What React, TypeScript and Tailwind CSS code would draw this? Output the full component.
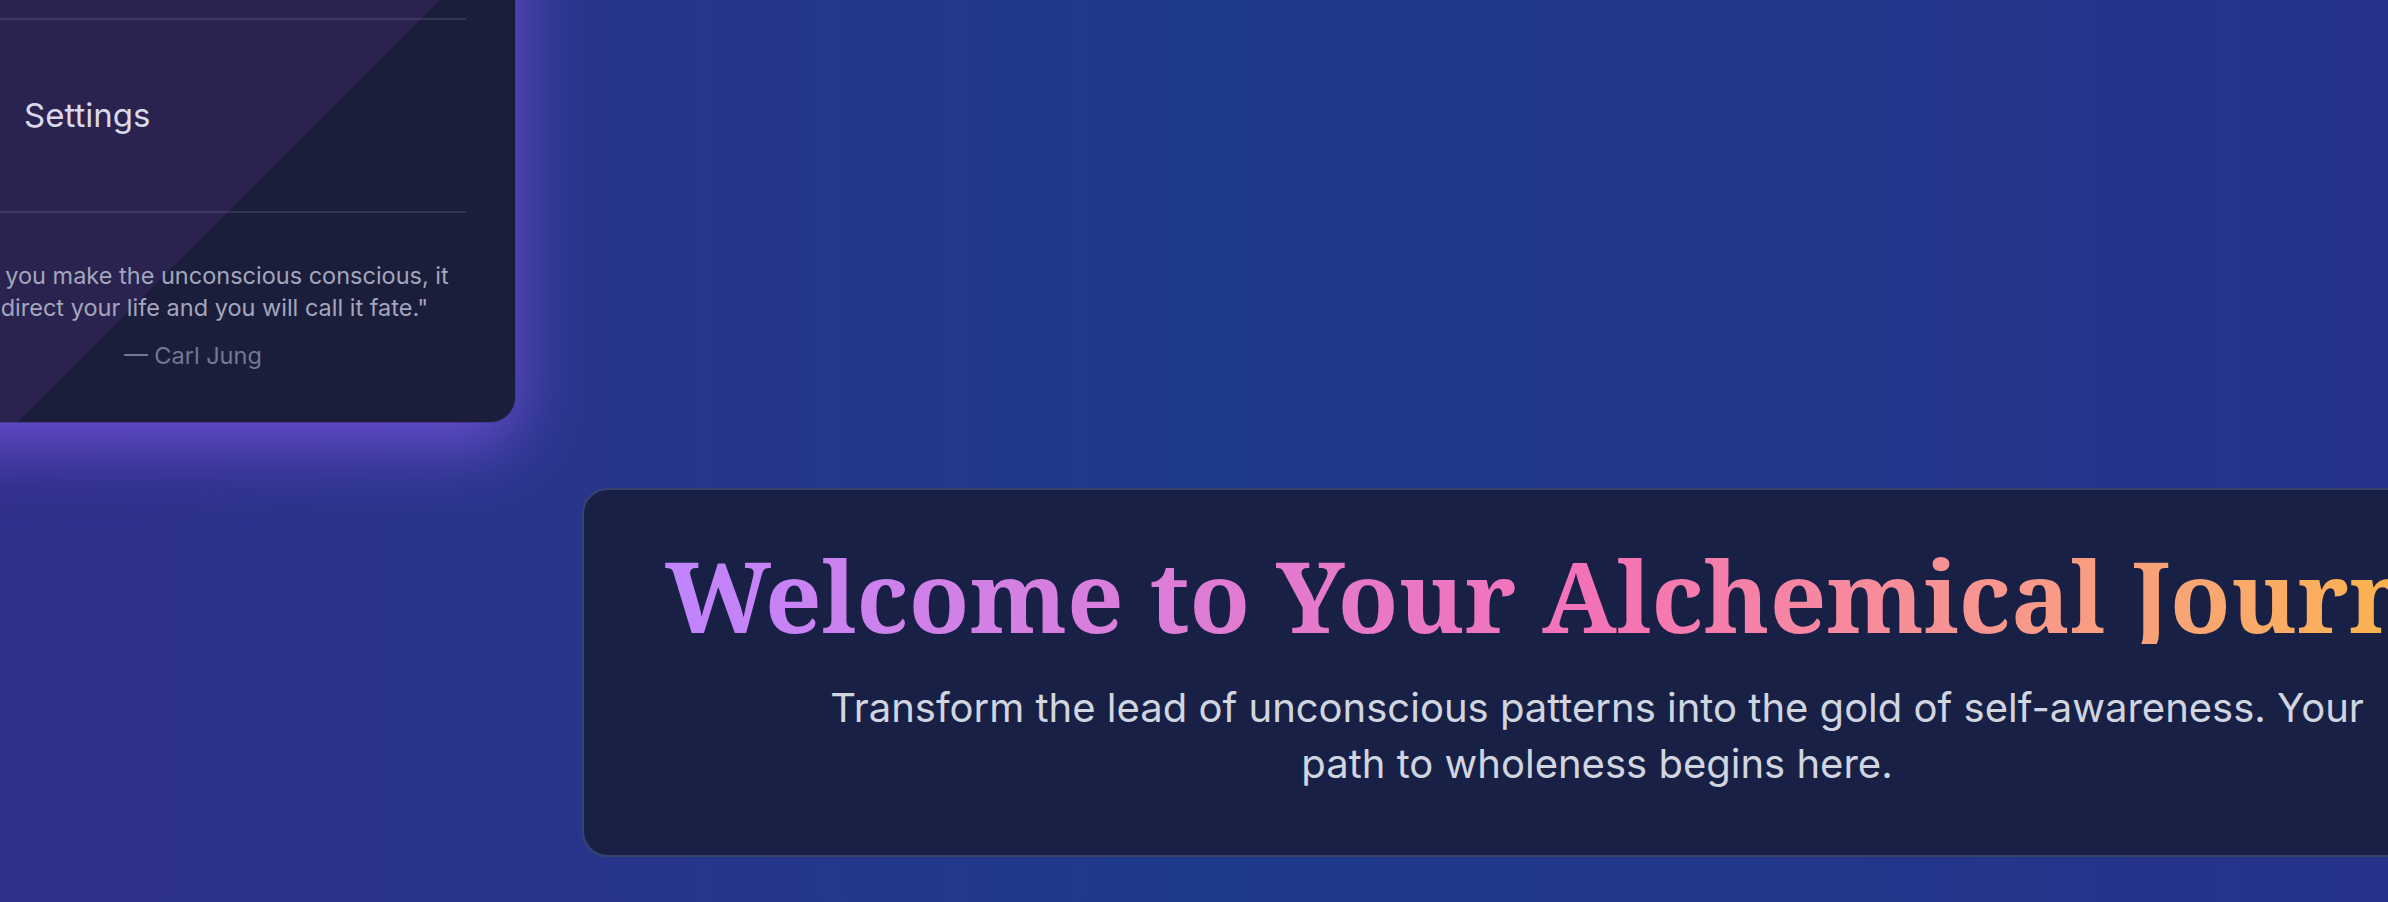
import React from 'react';
import { Settings, Moon } from 'lucide-react';

const App: React.FC = () => {
  return (
    <div className="h-[902px] w-full overflow-hidden bg-gradient-to-r from-[#2f308a] via-[#1e3a8a] to-[#26328a] font-['Inter',sans-serif]">
      <div className="flex items-start">
        {/* sidebar, partly scrolled out of view */}
        <aside className="-ml-[122px] -mt-[200px] w-[638px] shrink-0 rounded-[26px] border border-[#4a3a8f] bg-[linear-gradient(135deg,#2a2350_0px,#2a2350_537px,#1b1e3b_537px)] px-[49px] shadow-[0_20px_70px_rgba(139,92,246,0.7)]">
          <div className="flex h-[217px] items-center gap-[36px] pl-[30px] text-[33px] text-[#d9d9ec]">
            <Moon className="h-[30px] w-[30px]" />
            <span>Dream Journal</span>
          </div>
          <div className="flex h-[195px] items-center gap-[36px] border-y-2 border-white/10 pl-[30px] text-[33px] text-[#d9d9ec]">
            <Settings className="h-[30px] w-[30px]" />
            <span>Settings</span>
          </div>
          <div className="pb-[50px] pr-[8px] pt-[47px] text-center">
            <p className="text-[23.5px] leading-[32px] text-[#a3a6bd]">
              "Until you make the unconscious conscious, it will direct your life and you will call it fate."
            </p>
            <p className="mt-[16px] text-[23.5px] leading-[32px] text-[#747892]">— Carl Jung</p>
          </div>
        </aside>

        {/* welcome card */}
        <section className="ml-[66px] mt-[488px] w-[2030px] shrink-0 rounded-[26px] border-2 border-[#38446b] bg-[#182145] px-[80px] pb-[63px] pt-[55px]">
          <h1 className="whitespace-nowrap bg-gradient-to-r from-[#c084fc] via-[#f472b6] to-[#fcbd22] bg-clip-text text-center font-['Noto_Serif','DejaVu_Serif',serif] text-[99px] font-bold leading-[99px] text-transparent">
            Welcome to Your Alchemical Journey
          </h1>
          <p className="mx-auto mt-[36px] max-w-[1600px] text-center text-[40px] leading-[56px] text-[#d1d5e0]">
            Transform the lead of unconscious patterns into the gold of self-awareness. Your path to wholeness begins here.
          </p>
        </section>
      </div>
    </div>
  );
};

export default App;
